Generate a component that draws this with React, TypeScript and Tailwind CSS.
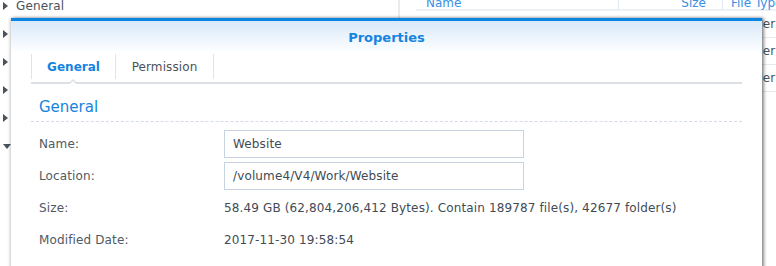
import React from 'react';

const treeRows = [
  { label: 'General', open: false },
  { label: '', open: false },
  { label: '', open: false },
  { label: '', open: false },
  { label: '', open: false },
  { label: '', open: true },
];

const fields = [
  { label: 'Name:', value: 'Website', input: true },
  { label: 'Location:', value: '/volume4/V4/Work/Website', input: true },
  { label: 'Size:', value: '58.49 GB (62,804,206,412 Bytes). Contain 189787 file(s), 42677 folder(s)', input: false },
  { label: 'Modified Date:', value: '2017-11-30 19:58:54', input: false },
];

const Caret = ({ open }: { open: boolean }) =>
  open ? (
    <svg width="8" height="5" viewBox="0 0 8 5" className="fill-[#4a525a]">
      <path d="M0 0h8L4 5z" />
    </svg>
  ) : (
    <svg width="5" height="8" viewBox="0 0 5 8" className="fill-[#4a525a]">
      <path d="M0 0l5 4-5 4z" />
    </svg>
  );

const Background = () => (
  <div className="flex h-full">
    <div className="w-[398px] -mt-[8px] shrink-0">
      {treeRows.map((row, i) => (
        <div key={i} className="h-[28px] flex items-center pl-[3px] gap-[5px]">
          <div className="w-[8px] flex justify-start">
            <Caret open={row.open} />
          </div>
          <span className="text-[12px] text-[#4a525a] tracking-[0.13px]">{row.label}</span>
        </div>
      ))}
    </div>
    <div className="flex-1 border-l-2 border-[#e9ecef] pl-[16px]">
      <div className="h-[15px] -mt-[4px] border-b-2 border-[#eef1f4] flex text-[12px] text-[#3a8ee6] leading-[14px]">
        <div className="w-[203px] pl-[10px] border-r border-[#dfe7ef]">Name</div>
        <div className="w-[104px] text-right pr-[16px] border-r border-[#dfe7ef]">Size</div>
        <div className="pl-[8px] whitespace-nowrap">File Type</div>
      </div>
      {[0, 1, 2].map((i) => (
        <div key={i} className="h-[27px] border-b border-[#e6ebf0] flex items-center text-[12px] text-[#4a525a]">
          <div className="w-[322px] shrink-0" />
          <span className="whitespace-nowrap">Folder</span>
        </div>
      ))}
    </div>
  </div>
);

export default function App() {
  return (
    <div
      className="relative w-[776px] h-[266px] overflow-hidden bg-white"
      style={{ fontFamily: '"DejaVu Sans", Verdana, sans-serif' }}
    >
      <Background />

      <div className="absolute left-[11px] top-[18px] w-[751px] h-[260px] bg-white border-t-[3px] border-[#0a86e2] shadow-[2px_0_3px_rgba(0,0,0,0.45),-1px_0_3px_rgba(0,0,0,0.2)]">
        <div className="h-[32px] bg-gradient-to-b from-[#d8e9f9] to-white flex items-center justify-center">
          <span className="text-[13px] font-bold text-[#1584e0] mt-[2px]">Properties</span>
        </div>

        <div className="mx-[20px] relative h-[31px] border-b-2 border-[#dcdfe3] flex">
          <div className="w-[85px] mt-[1px] h-[25px] border-l border-r border-[#dde4ec] flex items-center justify-center text-[12px] font-bold text-[#1584e0]">
            General
          </div>
          <div className="w-[98px] mt-[1px] h-[25px] border-r border-[#dde4ec] flex items-center justify-center text-[12px] text-[#4a525a] tracking-[0.1px]">
            Permission
          </div>
          <div className="absolute left-[37px] -bottom-[2px] w-0 h-0 border-l-[5px] border-r-[5px] border-b-[5px] border-l-transparent border-r-transparent border-b-[#dcdfe3]" />
          <div className="absolute left-[39px] -bottom-[2px] w-0 h-0 border-l-[3px] border-r-[3px] border-b-[3px] border-l-transparent border-r-transparent border-b-white" />
        </div>

        <div className="mx-[20px]">
          <div className="h-[38px] border-b border-dashed border-[#d3dce6] flex items-end pl-[8px] pb-[5px]">
            <span className="text-[15px] text-[#1584e0] leading-[18px]">General</span>
          </div>
          <div className="pt-[6px] pl-[8px]">
            {fields.map((f) => (
              <div key={f.label} className="h-[32px] flex items-center text-[12px] tracking-[0.13px]">
                <div className="w-[185px] text-[#505a64]">{f.label}</div>
                {f.input ? (
                  <div className="w-[300px] h-[28px] border border-[#c7d3df] flex items-center px-[8px] text-[#414b55]">
                    {f.value}
                  </div>
                ) : (
                  <div className="text-[#414b55] whitespace-nowrap">{f.value}</div>
                )}
              </div>
            ))}
          </div>
        </div>
      </div>
    </div>
  );
}
